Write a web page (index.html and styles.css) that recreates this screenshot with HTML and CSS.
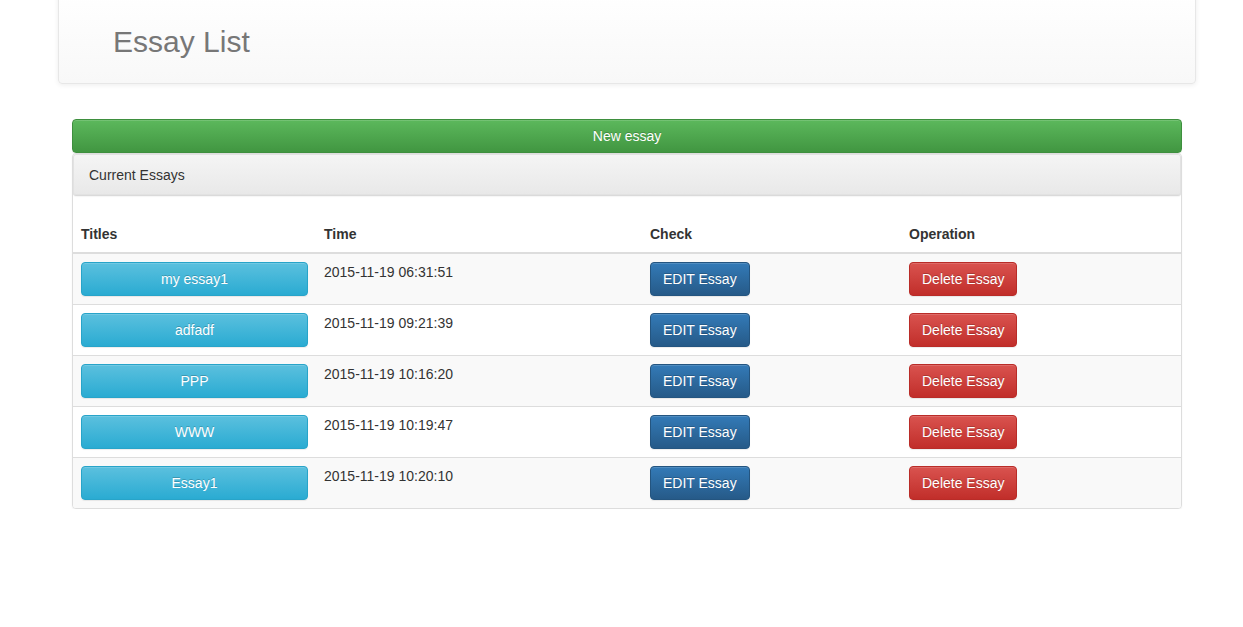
FILE: index.html
```html
<!DOCTYPE html>
<html lang="en">
<head>
<meta charset="utf-8">
<title>Essay List</title>
<link rel="stylesheet" href="styles.css">
</head>
<body>
<header class="topbar">
  <h1 class="brand">Essay List</h1>
</header>
<main class="content">
  <button class="btn btn-success btn-block">New essay</button>
  <section class="panel">
    <div class="panel-heading">Current Essays</div>
    <table class="table">
      <colgroup>
        <col class="c1"><col class="c2"><col class="c3"><col class="c4">
      </colgroup>
      <thead>
        <tr><th>Titles</th><th>Time</th><th>Check</th><th>Operation</th></tr>
      </thead>
      <tbody>
        <tr>
          <td><button class="btn btn-info btn-title">my essay1</button></td>
          <td>2015-11-19 06:31:51</td>
          <td><button class="btn btn-primary">EDIT Essay</button></td>
          <td><button class="btn btn-danger">Delete Essay</button></td>
        </tr>
        <tr>
          <td><button class="btn btn-info btn-title">adfadf</button></td>
          <td>2015-11-19 09:21:39</td>
          <td><button class="btn btn-primary">EDIT Essay</button></td>
          <td><button class="btn btn-danger">Delete Essay</button></td>
        </tr>
        <tr>
          <td><button class="btn btn-info btn-title">PPP</button></td>
          <td>2015-11-19 10:16:20</td>
          <td><button class="btn btn-primary">EDIT Essay</button></td>
          <td><button class="btn btn-danger">Delete Essay</button></td>
        </tr>
        <tr>
          <td><button class="btn btn-info btn-title">WWW</button></td>
          <td>2015-11-19 10:19:47</td>
          <td><button class="btn btn-primary">EDIT Essay</button></td>
          <td><button class="btn btn-danger">Delete Essay</button></td>
        </tr>
        <tr>
          <td><button class="btn btn-info btn-title">Essay1</button></td>
          <td>2015-11-19 10:20:10</td>
          <td><button class="btn btn-primary">EDIT Essay</button></td>
          <td><button class="btn btn-danger">Delete Essay</button></td>
        </tr>
      </tbody>
    </table>
  </section>
</main>
</body>
</html>
```

FILE: styles.css
```css
* { box-sizing: border-box; }
html, body {
  margin: 0;
  padding: 0;
  background: #fff;
  font-family: "Liberation Sans", Arial, Helvetica, sans-serif;
  font-size: 14px;
  line-height: 20px;
  color: #333;
}
.topbar {
  margin: -10px 0 0 58px;
  width: 1138px;
  height: 94px;
  padding: 34px 0 0 54px;
  background: linear-gradient(to bottom, #ffffff 0, #f8f8f8 100%);
  border: 1px solid #e7e7e7;
  border-radius: 4px;
  box-shadow: inset 0 1px 0 rgba(255,255,255,.15), 0 1px 5px rgba(0,0,0,.075);
}
.brand {
  margin: 0;
  font-size: 30px;
  line-height: 33px;
  font-weight: normal;
  color: #777;
}
.content {
  margin: 35px 0 0 72px;
  width: 1110px;
}
.btn {
  display: inline-block;
  padding: 6px 12px;
  font-family: inherit;
  font-size: 14px;
  line-height: 20px;
  color: #fff;
  text-align: center;
  white-space: nowrap;
  border: 1px solid transparent;
  border-radius: 4px;
  text-shadow: 0 -1px 0 rgba(0,0,0,.2);
  box-shadow: inset 0 1px 0 rgba(255,255,255,.15), 0 1px 1px rgba(0,0,0,.075);
  cursor: pointer;
}
.btn-block { display: block; width: 100%; }
.btn-success {
  background: linear-gradient(to bottom, #5cb85c 0, #419641 100%);
  border-color: #3e8f3e;
}
.btn-info {
  background: linear-gradient(to bottom, #5bc0de 0, #2aabd2 100%);
  border-color: #28a4c9;
}
.btn-primary {
  background: linear-gradient(to bottom, #337ab7 0, #265a88 100%);
  border-color: #245580;
}
.btn-danger {
  background: linear-gradient(to bottom, #d9534f 0, #c12e2a 100%);
  border-color: #b92c28;
}
.btn-title { width: 227px; }
.panel {
  background: #fff;
  border: 1px solid #ddd;
  border-radius: 4px;
  box-shadow: 0 1px 2px rgba(0,0,0,.05);
  overflow: hidden;
}
.panel-heading {
  padding: 11px 15px 10px 16px;
  background: linear-gradient(to bottom, #f5f5f5 0, #e8e8e8 100%);
  border-bottom: 1px solid #dadada;
  border-radius: 3px 3px 3px 3px;
  box-shadow: inset 0 0 0 1px #e2e2e2, 0 1px 1px rgba(0,0,0,.04);
  color: #333;
}
.table {
  width: 100%;
  margin-top: 20px;
  border-collapse: collapse;
  table-layout: fixed;
}
.c1 { width: 243px; }
.c2 { width: 326px; }
.c3 { width: 259px; }
.c4 { width: 280px; }
.table th {
  padding: 8px;
  text-align: left;
  font-weight: bold;
  vertical-align: bottom;
  border-bottom: 2px solid #ddd;
}
.table td {
  padding: 8px;
  vertical-align: top;
  border-top: 1px solid #ddd;
}
.table thead + tbody tr:first-child td { border-top: 0; }
.table tbody tr:nth-child(odd) { background: #f9f9f9; }
```
